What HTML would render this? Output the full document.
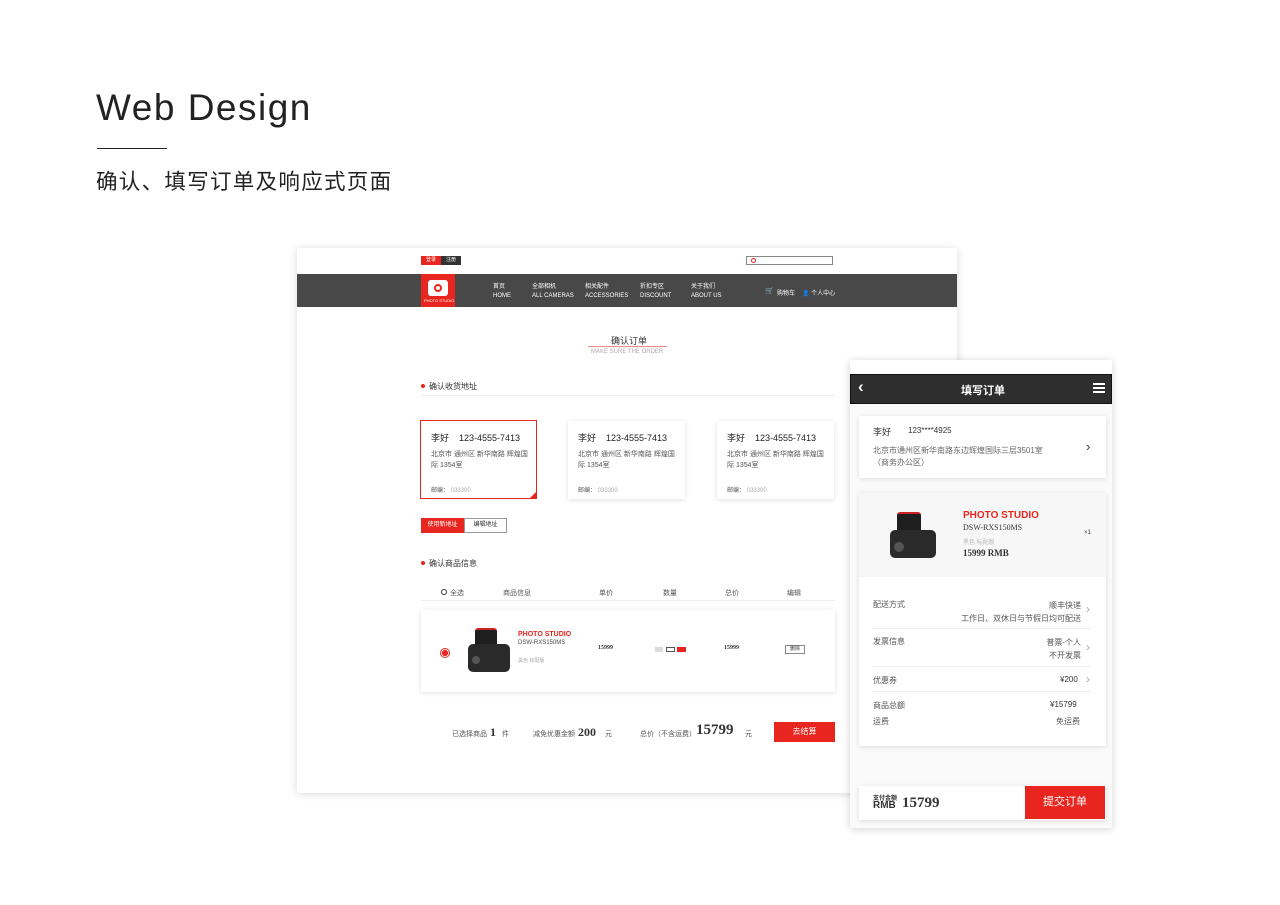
<!DOCTYPE html>
<html><head><meta charset="utf-8"><style>
*{margin:0;padding:0;box-sizing:border-box}
body{width:1280px;height:905px;background:#fff;position:relative;overflow:hidden;font-family:"Liberation Sans","Noto Sans CJK SC",sans-serif;color:#333}
.a{position:absolute;white-space:nowrap}
.s{font-size:7px;color:#555}
.card{position:absolute;background:#fff;box-shadow:0 1px 5px rgba(0,0,0,.12)}
.serif{font-family:"Liberation Serif",serif;font-weight:bold}
</style></head><body>
<div class="a" style="left:96px;top:87px;font-size:37px;color:#222;letter-spacing:1.5px">Web Design</div>
<div class="a" style="left:97px;top:148px;width:70px;height:1px;background:#222"></div>
<div class="a" style="left:96px;top:165px;font-size:21.5px;color:#222;letter-spacing:1.3px">确认、填写订单及响应式页面</div>

<!-- desktop -->
<div class="a" style="left:297px;top:248px;width:660px;height:545px;background:#fff;box-shadow:0 1px 8px rgba(0,0,0,.15)"></div>
<div class="a" style="left:421px;top:256px;width:20px;height:9px;background:#e8261f;color:#fff;font-size:5px;text-align:center;line-height:9px">登录</div>
<div class="a" style="left:441px;top:256px;width:20px;height:9px;background:#333;color:#fff;font-size:5px;text-align:center;line-height:9px">注册</div>
<div class="a" style="left:746px;top:256px;width:87px;height:9px;border:1px solid #888"></div>
<div class="a" style="left:751px;top:258px;width:5px;height:5px;border:1px solid #e8261f;border-radius:50%"></div>
<div class="a" style="left:297px;top:274px;width:660px;height:33px;background:#484848"></div>
<div class="a" style="left:421px;top:274px;width:34px;height:33px;background:#e8261f"></div>
<div class="a" style="left:428px;top:280px;width:20px;height:16px;background:#fff;border-radius:3px"></div>
<div class="a" style="left:434px;top:284px;width:8px;height:8px;border:2px solid #e8261f;border-radius:50%"></div>
<div class="a" style="left:424px;top:298px;font-size:4px;color:#fff">PHOTO STUDIO</div>
<div class="a" style="left:493px;top:283px;font-size:6px;color:#fff;line-height:9px">首页<br>HOME</div>
<div class="a" style="left:532px;top:283px;font-size:6px;color:#fff;line-height:9px">全部相机<br>ALL CAMERAS</div>
<div class="a" style="left:585px;top:283px;font-size:6px;color:#fff;line-height:9px">相关配件<br>ACCESSORIES</div>
<div class="a" style="left:640px;top:283px;font-size:6px;color:#fff;line-height:9px">折扣专区<br>DISCOUNT</div>
<div class="a" style="left:691px;top:283px;font-size:6px;color:#fff;line-height:9px">关于我们<br>ABOUT US</div>
<div class="a" style="left:765px;top:287px;font-size:7px;color:#e8261f">🛒</div>
<div class="a" style="left:777px;top:288px;font-size:6px;color:#fff">购物车</div>
<div class="a" style="left:802px;top:288px;font-size:6px;color:#fff">👤 个人中心</div>

<div class="a" style="left:611px;top:334px;font-size:9px;color:#333">确认订单</div>
<div class="a" style="left:588px;top:346px;width:79px;height:1px;background:#e88"></div>
<div class="a" style="left:591px;top:349px;font-size:6px;color:#aaa">MAKE SURE THE ORDER</div>

<div class="a" style="left:421px;top:384px;width:4px;height:4px;border-radius:50%;background:#e8261f"></div>
<div class="a" style="left:429px;top:381px;font-size:8px">确认收货地址</div>
<div class="a" style="left:421px;top:395px;width:414px;height:1px;background:#eee"></div>

<div class="card" style="left:420px;top:420px;width:117px;height:79px;border:1px solid #e8261f;box-shadow:none"></div>
<div class="card" style="left:568px;top:421px;width:117px;height:78px"></div>
<div class="card" style="left:717px;top:421px;width:117px;height:78px"></div>
<div class="a" style="left:530px;top:491px;width:0;height:0;border-left:7px solid transparent;border-bottom:7px solid #e8261f"></div>

<div class="a" style="left:421px;top:518px;width:43px;height:15px;background:#e8261f;color:#fff;font-size:6px;line-height:15px;text-align:center">使用新地址</div>
<div class="a" style="left:464px;top:518px;width:43px;height:15px;border:1px solid #999;font-size:6px;line-height:13px;text-align:center">编辑地址</div>

<div class="a" style="left:421px;top:561px;width:4px;height:4px;border-radius:50%;background:#e8261f"></div>
<div class="a" style="left:429px;top:558px;font-size:8px">确认商品信息</div>
<div class="a" style="left:441px;top:589px;width:6px;height:6px;border:1px solid #333;border-radius:50%"></div>
<div class="a s" style="left:450px;top:588px">全选</div>
<div class="a s" style="left:503px;top:588px">商品信息</div>
<div class="a s" style="left:599px;top:588px">单价</div>
<div class="a s" style="left:663px;top:588px">数量</div>
<div class="a s" style="left:725px;top:588px">总价</div>
<div class="a s" style="left:787px;top:588px">编辑</div>
<div class="a" style="left:421px;top:600px;width:414px;height:1px;background:#eee"></div>
<div class="card" style="left:421px;top:610px;width:414px;height:82px"></div>
<div class="a" style="left:440px;top:648px;width:10px;height:10px;border-radius:50%;border:1px solid #e8261f;background:radial-gradient(#e8261f 50%,#fff 60%)"></div>
<!-- camera small -->
<div class="a" style="left:475px;top:628px;width:22px;height:20px;background:#1e1e1e;border-radius:3px;border-top:2px solid #c22"></div>
<div class="a" style="left:468px;top:644px;width:42px;height:28px;background:#2a2a2a;border-radius:5px"></div>
<div class="a" style="left:472px;top:656px;width:8px;height:8px;border-radius:50%;background:#555"></div>
<div class="a" style="left:518px;top:631px;font-size:7px;color:#e8261f;font-weight:bold">PHOTO STUDIO</div>
<div class="a" style="left:518px;top:640px;font-size:6px;color:#444">DSW-RXS150MS</div>
<div class="a" style="left:518px;top:657px;font-size:5px;color:#aaa">黑色 标配版</div>
<div class="a serif" style="left:598px;top:645px;font-size:6px">15999</div>
<div class="a" style="left:655px;top:647px;width:8px;height:5px;background:#ddd"></div>
<div class="a" style="left:666px;top:647px;width:9px;height:5px;border:1px solid #555"></div>
<div class="a" style="left:677px;top:647px;width:9px;height:5px;background:#e8261f"></div>
<div class="a serif" style="left:724px;top:645px;font-size:6px">15999</div>
<div class="a" style="left:785px;top:645px;width:20px;height:9px;border:1px solid #888;font-size:5px;text-align:center;line-height:7px">删除</div>

<div class="a s" style="left:452px;top:729px">已选择商品</div>
<div class="a serif" style="left:490px;top:725px;font-size:12px">1</div>
<div class="a s" style="left:502px;top:729px">件</div>
<div class="a s" style="left:533px;top:729px">减免优惠金额</div>
<div class="a serif" style="left:578px;top:725px;font-size:12px">200</div>
<div class="a s" style="left:605px;top:729px">元</div>
<div class="a s" style="left:640px;top:729px">总价（不含运费）</div>
<div class="a serif" style="left:696px;top:722px;font-size:15px">15799</div>
<div class="a s" style="left:745px;top:729px">元</div>
<div class="a" style="left:774px;top:722px;width:61px;height:20px;background:#e8261f;color:#fff;font-size:8px;text-align:center;line-height:20px">去结算</div>

<!-- mobile -->
<div class="a" style="left:850px;top:360px;width:262px;height:468px;background:#fafafa;box-shadow:0 1px 8px rgba(0,0,0,.18)"></div>
<div class="a" style="left:850px;top:360px;width:262px;height:14px;background:#fff"></div>
<div class="a" style="left:850px;top:374px;width:262px;height:30px;background:#2e2e2e;border:1px solid #111"></div>
<div class="a" style="left:858px;top:377px;font-size:17px;color:#fff;font-weight:bold">‹</div>
<div class="a" style="left:961px;top:382px;font-size:11px;color:#fff;font-weight:bold">填写订单</div>
<div class="a" style="left:1093px;top:383px;width:12px;height:11px;background:repeating-linear-gradient(#fff 0 2px,transparent 2px 4px)"></div>
<div class="card" style="left:859px;top:416px;width:247px;height:62px"></div>
<div class="a" style="left:873px;top:425px;font-size:9px">李好</div>
<div class="a" style="left:908px;top:426px;font-size:8px">123****4925</div>
<div class="a" style="left:873px;top:445px;font-size:8px;color:#666;line-height:12px">北京市通州区新华南路东边辉煌国际三层3501室<br>（商务办公区）</div>
<div class="a" style="left:1086px;top:439px;font-size:13px">›</div>
<div class="card" style="left:859px;top:493px;width:247px;height:253px;background:#fff"></div>
<div class="a" style="left:859px;top:493px;width:247px;height:84px;background:#f7f7f7"></div>
<div class="a" style="left:897px;top:512px;width:24px;height:22px;background:#1e1e1e;border-radius:3px;border-top:2px solid #c22"></div>
<div class="a" style="left:890px;top:530px;width:46px;height:28px;background:#2a2a2a;border-radius:5px"></div>
<div class="a" style="left:894px;top:542px;width:10px;height:10px;border-radius:50%;background:#555"></div>
<div class="a" style="left:963px;top:510px;font-size:10px;color:#e8261f;font-weight:bold">PHOTO STUDIO</div>
<div class="a" style="left:963px;top:523px;font-size:8px;font-family:'Liberation Serif',serif">DSW-RXS150MS</div>
<div class="a" style="left:963px;top:537px;font-size:6px;color:#bbb">黑色 标配版</div>
<div class="a serif" style="left:963px;top:548px;font-size:9px">15999 RMB</div>
<div class="a" style="left:1084px;top:530px;font-size:6px">×1</div>
<div class="a" style="left:873px;top:599px;font-size:8px;color:#555">配送方式</div>
<div class="a" style="left:1081px;top:599px;font-size:8px;color:#555;line-height:13px;text-align:right;transform:translateX(-100%)">顺丰快递<br>工作日、双休日与节假日均可配送</div>
<div class="a" style="left:873px;top:628px;width:218px;height:1px;background:#eee"></div>
<div class="a" style="left:873px;top:636px;font-size:8px;color:#555">发票信息</div>
<div class="a" style="left:1081px;top:636px;font-size:8px;color:#555;line-height:13px;text-align:right;transform:translateX(-100%)">普票-个人<br>不开发票</div>
<div class="a" style="left:873px;top:666px;width:218px;height:1px;background:#eee"></div>
<div class="a" style="left:873px;top:675px;font-size:8px;color:#555">优惠券</div>
<div class="a" style="left:1060px;top:675px;font-size:8px">¥200</div>
<div class="a" style="left:873px;top:691px;width:218px;height:1px;background:#eee"></div>
<div class="a" style="left:873px;top:700px;font-size:8px;color:#555">商品总额</div>
<div class="a" style="left:1050px;top:700px;font-size:8px">¥15799</div>
<div class="a" style="left:873px;top:716px;font-size:8px;color:#555">运费</div>
<div class="a" style="left:1056px;top:716px;font-size:8px;color:#555">免运费</div>
<div class="a" style="left:1086px;top:602px;font-size:12px;color:#aaa">›</div>
<div class="a" style="left:1086px;top:640px;font-size:12px;color:#aaa">›</div>
<div class="a" style="left:1086px;top:672px;font-size:12px;color:#aaa">›</div>
<div class="card" style="left:859px;top:786px;width:247px;height:34px"></div>
<div class="a" style="left:873px;top:793px;font-size:6px;font-weight:bold">支付金额</div>
<div class="a" style="left:873px;top:800px;font-size:10px;font-weight:bold">RMB</div>
<div class="a serif" style="left:902px;top:795px;font-size:15px">15799</div>
<div class="a" style="left:1025px;top:786px;width:80px;height:33px;background:#e8261f;color:#fff;font-size:11px;text-align:center;line-height:33px">提交订单</div>

<div class="a" style="left:431px;top:431px;font-size:9px;color:#222">李好 &nbsp; &nbsp;123-4555-7413</div>
<div class="a s" style="left:431px;top:449px;line-height:11px">北京市 通州区 新华南路 辉煌国<br>际 1354室</div>
<div class="a s" style="left:431px;top:485px;font-size:6px">邮编： <span style="color:#aaa">033300</span></div>
<div class="a" style="left:578px;top:431px;font-size:9px;color:#222">李好 &nbsp; &nbsp;123-4555-7413</div>
<div class="a s" style="left:578px;top:449px;line-height:11px">北京市 通州区 新华南路 辉煌国<br>际 1354室</div>
<div class="a s" style="left:578px;top:485px;font-size:6px">邮编： <span style="color:#aaa">033300</span></div>
<div class="a" style="left:727px;top:431px;font-size:9px;color:#222">李好 &nbsp; &nbsp;123-4555-7413</div>
<div class="a s" style="left:727px;top:449px;line-height:11px">北京市 通州区 新华南路 辉煌国<br>际 1354室</div>
<div class="a s" style="left:727px;top:485px;font-size:6px">邮编： <span style="color:#aaa">033300</span></div>
</body></html>
